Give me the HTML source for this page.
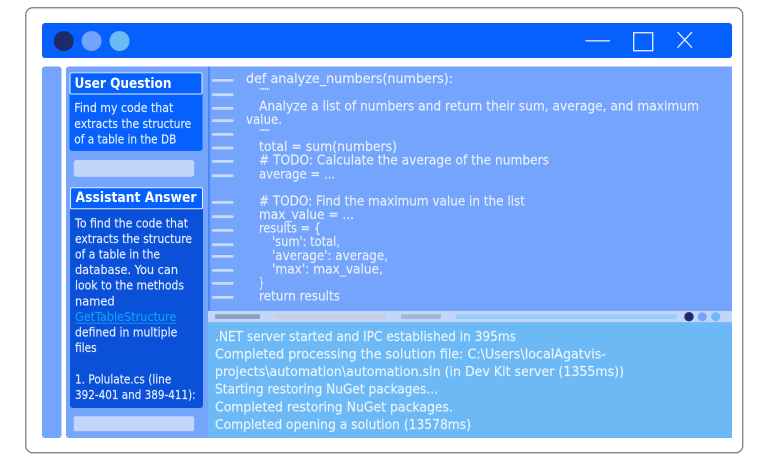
<!DOCTYPE html>
<html><head><meta charset="utf-8"><style>
html,body{margin:0;padding:0;background:#fff;width:768px;height:460px;overflow:hidden}
svg{display:block}
text{font-family:"DejaVu Sans","Liberation Sans",sans-serif;white-space:pre}
.c{font-size:13.5px;fill:#e9f0fe;stroke:#e9f0fe;stroke-width:.15px}
.t{font-size:13.5px;fill:#eaf5fe;stroke:#eaf5fe;stroke-width:.15px}
.s{font-size:12px;fill:#e6eefe;stroke:#e6eefe;stroke-width:.15px}
.h{font-size:14.5px;font-weight:bold;fill:#fff}
</style></head><body>
<svg width="768" height="460" viewBox="0 0 768 460" xmlns="http://www.w3.org/2000/svg">
<rect x="25.75" y="7.75" width="717" height="445" rx="7" fill="#fff" stroke="#777" stroke-width="1.2"/>
<rect x="42" y="23" width="690" height="35" rx="3" fill="#0560fd"/>
<circle cx="63.7" cy="41" r="10" fill="#1f2a68"/>
<circle cx="91.6" cy="41" r="10" fill="#72a2fb"/>
<circle cx="119.5" cy="41" r="10" fill="#6cb9f6"/>
<path d="M585.5 40.8H610" stroke="#dbe7fe" stroke-width="1.4" fill="none"/>
<rect x="633.7" y="32.7" width="19" height="18" stroke="#dbe7fe" stroke-width="1.4" fill="none"/>
<path d="M677.5 32L692 47.7M692 32L677.5 47.7" stroke="#dbe7fe" stroke-width="1.4" fill="none"/>

<rect x="42" y="66.5" width="19.5" height="371.5" rx="3" fill="#74a4fb"/>
<path d="M69 66.5H732V438H69a3 3 0 0 1-3-3V69.5a3 3 0 0 1 3-3z" fill="#74a4fb"/>
<rect x="208" y="66.5" width="2" height="245" fill="#4a86fa"/>
<rect x="235" y="72" width="0.8" height="233" fill="#6cb0f8"/>
<g fill="#c8daf9">
<rect x="212" y="79" width="21.5" height="2.8" rx="1"/><rect x="212" y="93.3" width="21.5" height="2.8" rx="1"/><rect x="212" y="107" width="21.5" height="2.8" rx="1"/><rect x="212" y="119.3" width="21.5" height="2.8" rx="1"/><rect x="212" y="133" width="21.5" height="2.8" rx="1"/><rect x="212" y="146.6" width="21.5" height="2.8" rx="1"/><rect x="212" y="160" width="21.5" height="2.8" rx="1"/><rect x="212" y="174.3" width="21.5" height="2.8" rx="1"/><rect x="212" y="201" width="21.5" height="2.8" rx="1"/><rect x="212" y="215.3" width="21.5" height="2.8" rx="1"/><rect x="212" y="229" width="21.5" height="2.8" rx="1"/><rect x="212" y="243.3" width="21.5" height="2.8" rx="1"/><rect x="212" y="255" width="21.5" height="2.8" rx="1"/><rect x="212" y="269" width="21.5" height="2.8" rx="1"/><rect x="212" y="282" width="21.5" height="2.8" rx="1"/><rect x="212" y="296" width="21.5" height="2.8" rx="1"/>
</g>

<rect x="69.5" y="72" width="133" height="79" rx="3" fill="#0560fd"/>
<rect x="70" y="72.8" width="132" height="21.2" rx="1.5" fill="#0560fd" stroke="#e6eefe" stroke-width="1"/>
<text class="h" x="74.5" y="88" textLength="97" lengthAdjust="spacingAndGlyphs">User Question</text>
<text class="s" x="74.3" y="112" textLength="99" lengthAdjust="spacingAndGlyphs">Find my code that</text>
<text class="s" x="74.3" y="128" textLength="117" lengthAdjust="spacingAndGlyphs">extracts the structure</text>
<text class="s" x="74.3" y="143.5" textLength="102" lengthAdjust="spacingAndGlyphs">of a table in the DB</text>
<rect x="73.7" y="160" width="120.5" height="16.7" rx="3" fill="#c2d6fc"/>

<path d="M70 209H203V405a3 3 0 0 1-3 3H73a3 3 0 0 1-3-3z" fill="#0a50d8"/>
<rect x="70.5" y="187.8" width="132" height="21" rx="1.5" fill="#0560fd" stroke="#e6eefe" stroke-width="1"/>
<text class="h" x="75.5" y="202" textLength="121" lengthAdjust="spacingAndGlyphs">Assistant Answer</text>
<text class="s" x="75" y="227.5" textLength="113" lengthAdjust="spacingAndGlyphs">To find the code that</text>
<text class="s" x="75" y="243" textLength="117" lengthAdjust="spacingAndGlyphs">extracts the structure</text>
<text class="s" x="75" y="258.5" textLength="85" lengthAdjust="spacingAndGlyphs">of a table in the</text>
<text class="s" x="75" y="274" textLength="103" lengthAdjust="spacingAndGlyphs">database. You can</text>
<text class="s" x="75" y="289.5" textLength="109" lengthAdjust="spacingAndGlyphs">look to the methods</text>
<text class="s" x="75" y="305.5" textLength="39.7" lengthAdjust="spacingAndGlyphs">named</text>
<text class="s" x="75" y="321" textLength="101.3" lengthAdjust="spacingAndGlyphs" style="fill:#0aa2fb;stroke:#0aa2fb">GetTableStructure</text>
<rect x="75" y="322.8" width="101.3" height="0.8" fill="#0aa2fb"/>
<text class="s" x="75" y="336.5" textLength="102.3" lengthAdjust="spacingAndGlyphs">defined in multiple</text>
<text class="s" x="75" y="352" textLength="21.7" lengthAdjust="spacingAndGlyphs">files</text>
<text class="s" x="75" y="383.5" textLength="96.3" lengthAdjust="spacingAndGlyphs">1. Polulate.cs (line</text>
<text class="s" x="75" y="399" textLength="120.7" lengthAdjust="spacingAndGlyphs">392-401 and 389-411):</text>
<rect x="73.7" y="416.3" width="120.5" height="15" rx="2" fill="#c2d6fc"/>

<text class="c" x="246" y="83" textLength="207" lengthAdjust="spacingAndGlyphs">def analyze_numbers(numbers):</text>
<text x="259" y="93" style="font-size:7px;fill:#e9f0fe" textLength="11" lengthAdjust="spacing">"""""</text>
<text class="c" x="259" y="110.5" textLength="440" lengthAdjust="spacingAndGlyphs">Analyze a list of numbers and return their sum, average, and maximum</text>
<text class="c" x="246" y="124" textLength="36" lengthAdjust="spacingAndGlyphs">value.</text>
<text x="259" y="134" style="font-size:7px;fill:#e9f0fe" textLength="11" lengthAdjust="spacing">"""""</text>
<text class="c" x="259" y="151" textLength="138" lengthAdjust="spacingAndGlyphs">total = sum(numbers)</text>
<text class="c" x="259" y="164.5" textLength="290" lengthAdjust="spacingAndGlyphs"># TODO: Calculate the average of the numbers</text>
<text class="c" x="259" y="178.5" textLength="76" lengthAdjust="spacingAndGlyphs">average = ...</text>
<text class="c" x="259" y="205.5" textLength="266" lengthAdjust="spacingAndGlyphs"># TODO: Find the maximum value in the list</text>
<text class="c" x="259" y="219" textLength="95" lengthAdjust="spacingAndGlyphs">max_value = ...</text>
<text class="c" x="259" y="232.5" textLength="62" lengthAdjust="spacingAndGlyphs">results = {</text>
<text class="c" x="272" y="246" textLength="68" lengthAdjust="spacingAndGlyphs">'sum': total,</text>
<text class="c" x="272" y="260" textLength="116" lengthAdjust="spacingAndGlyphs">'average': average,</text>
<text class="c" x="272" y="273.5" textLength="111" lengthAdjust="spacingAndGlyphs">'max': max_value,</text>
<text class="c" x="259" y="287" textLength="5" lengthAdjust="spacingAndGlyphs">}</text>
<text class="c" x="259" y="300.5" textLength="81" lengthAdjust="spacingAndGlyphs">return results</text>

<rect x="208" y="311" width="524" height="11.3" fill="#c2d6fc"/>
<rect x="215" y="314.3" width="45" height="4.7" rx="1" fill="#8b9fc0"/>
<rect x="275" y="314.3" width="111" height="4.7" rx="1" fill="#c6cfdc"/>
<rect x="401" y="314.3" width="40" height="4.7" rx="1" fill="#a8b5d2"/>
<rect x="456" y="314.3" width="221" height="4.7" rx="1" fill="#9ccafb"/>
<circle cx="689" cy="316.7" r="4.7" fill="#1f2a68"/>
<circle cx="702.3" cy="316.7" r="4.5" fill="#72a2fb"/>
<circle cx="715.7" cy="316.7" r="4.5" fill="#6cb9f6"/>

<rect x="208" y="322.3" width="524" height="115.7" fill="#6cb9f6"/>
<text class="t" x="215" y="341" textLength="301" lengthAdjust="spacingAndGlyphs">.NET server started and IPC established in 395ms</text>
<text class="t" x="215" y="358.5" textLength="391" lengthAdjust="spacingAndGlyphs">Completed processing the solution file: C:\Users\localAgatvis-</text>
<text class="t" x="215" y="376" textLength="409" lengthAdjust="spacingAndGlyphs">projects\automation\automation.sln (in Dev Kit server (1355ms))</text>
<text class="t" x="215" y="393.5" textLength="223" lengthAdjust="spacingAndGlyphs">Starting restoring NuGet packages...</text>
<text class="t" x="215" y="411.5" textLength="238" lengthAdjust="spacingAndGlyphs">Completed restoring NuGet packages.</text>
<text class="t" x="215" y="429" textLength="256" lengthAdjust="spacingAndGlyphs">Completed opening a solution (13578ms)</text>
</svg>
</body></html>
